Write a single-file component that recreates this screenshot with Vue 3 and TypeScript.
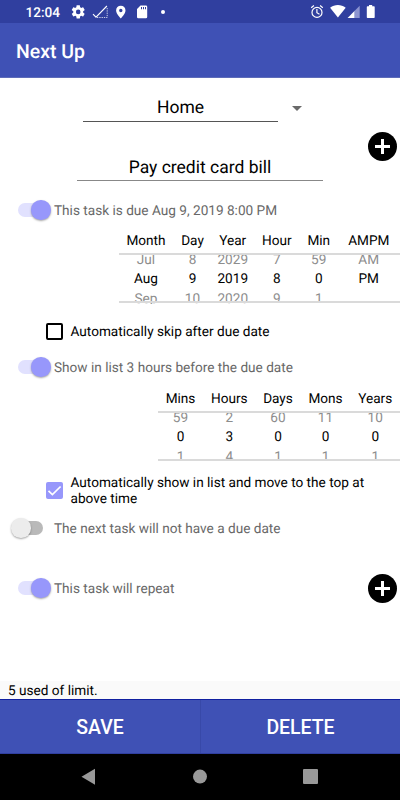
<script setup lang="ts">
import { ref } from 'vue'

interface PickerColumn {
  label: string
  before: string
  value: string
  after: string
}

const category = ref('Home')
const title = ref('Pay credit card bill')

const dueColumns: PickerColumn[] = [
  { label: 'Month', before: 'Jul', value: 'Aug', after: 'Sep' },
  { label: 'Day', before: '8', value: '9', after: '10' },
  { label: 'Year', before: '2029', value: '2019', after: '2020' },
  { label: 'Hour', before: '7', value: '8', after: '9' },
  { label: 'Min', before: '59', value: '0', after: '1' },
  { label: 'AMPM', before: 'AM', value: 'PM', after: '' },
]

const leadColumns: PickerColumn[] = [
  { label: 'Mins', before: '59', value: '0', after: '1' },
  { label: 'Hours', before: '2', value: '3', after: '4' },
  { label: 'Days', before: '60', value: '0', after: '1' },
  { label: 'Mons', before: '11', value: '0', after: '1' },
  { label: 'Years', before: '10', value: '0', after: '1' },
]
</script>

<template>
  <div class="screen">
    <header class="status">
      <span class="clock">12:04</span>
      <svg class="status-icons" viewBox="0 0 100 23" width="100" height="23">
        <path fill="#fff" fill-rule="evenodd" transform="translate(9.3 4) scale(.66)" d="M19.43 12.98c.04-.32.07-.64.07-.98s-.03-.66-.07-.98l2.11-1.65c.19-.15.24-.42.12-.64l-2-3.46c-.12-.22-.39-.3-.61-.22l-2.49 1c-.52-.4-1.08-.73-1.69-.98l-.38-2.65C14.46 2.18 14.25 2 14 2h-4c-.25 0-.46.18-.49.42l-.38 2.65c-.61.25-1.17.59-1.69.98l-2.49-1c-.23-.09-.49 0-.61.22l-2 3.46c-.13.22-.07.49.12.64l2.11 1.65c-.04.32-.07.65-.07.98s.03.66.07.98l-2.11 1.65c-.19.15-.24.42-.12.64l2 3.46c.12.22.39.3.61.22l2.49-1c.52.4 1.08.73 1.69.98l.38 2.65c.03.24.24.42.49.42h4c.25 0 .46-.18.49-.42l.38-2.65c.61-.25 1.17-.59 1.69-.98l2.49 1c.23.09.49 0 .61-.22l2-3.46c.12-.22.07-.49-.12-.64zM12 15.500a3.500 3.500 0 1 1 0-7 3.500 3.500 0 0 1 0 7z" />
        <path fill="none" stroke="#fff" stroke-width="1.100" d="M32 14.200l3 3L45.900 6" />
        <path fill="none" stroke="#fff" stroke-opacity=".75" stroke-dasharray="1.300 1" d="M46.200 8v9.500H35" />
        <path fill="#fff" fill-rule="evenodd" d="M59.800 5.800c-2.700 0-4.700 2-4.700 4.600 0 3.400 4.700 8 4.700 8s4.700-4.600 4.700-8c0-2.600-2-4.600-4.700-4.600zm0 3a1.700 1.700 0 1 1 0 3.400 1.700 1.700 0 0 1 0-3.400z" />
        <path fill="#fff" fill-rule="evenodd" d="M79.500 5.400h5.400q1.300 0 1.300 1.300v10.300q0 1.300-1.300 1.300h-7.600q-1.300 0-1.300-1.300V9zM80 7v2.200h1V7zm2 0v2.200h1V7zm2 0v2.200h1V7z" />
      </svg>
      <span class="dot"></span>
      <svg class="system-icons" viewBox="0 0 70 23" width="70" height="23">
        <g fill="none" stroke="#fff" stroke-width="1.200">
          <circle cx="7" cy="12.400" r="5" />
          <path d="M6.900 9v3.700l2.600 1.500M1.200 7.700l2.700-2.200M12.800 7.700l-2.700-2.200" />
        </g>
        <path fill="#fff" d="M20.100 7.800C24.600 4 31.100 4 35.700 7.800L27.900 17.500z" />
        <path fill="#fff" d="M37.600 18l7.100-7.200V18z" />
        <path fill="#8c94d0" d="M44.700 10.800l5-5V18h-5z" />
        <path fill="#fff" d="M59 5h3.200v1.200H64q.7 0 .7.700v10.400q0 .7-.7.700h-6.500q-.7 0-.7-.7V6.900q0-.7.700-.7H59z" />
      </svg>
    </header>
    <div class="appbar">Next Up</div>

    <main class="form">
      <div class="category-row">
        <div class="field category">{{ category }}</div>
        <span class="caret"></span>
      </div>
      <div class="title-row">
        <div class="field title">{{ title }}</div>
        <button class="add" aria-label="Add">
          <svg viewBox="0 0 29 29" width="29" height="29"><circle cx="14.500" cy="14.500" r="14.500" /><path d="M14.500 7v15M7 14.500h15" stroke="#fff" stroke-width="3" /></svg>
        </button>
      </div>

      <div class="switch-row">
        <span class="switch on"><i></i></span>
        <span class="text">This task is due Aug 9, 2019 8:00 PM</span>
      </div>

      <div class="picker due">
        <div v-for="c in dueColumns" :key="c.label" class="column">
          <span class="label">{{ c.label }}</span>
          <div class="wheel">
            <span>{{ c.before }}</span>
            <span class="current">{{ c.value }}</span>
            <span>{{ c.after }}</span>
          </div>
        </div>
      </div>

      <div class="check-row skip">
        <span class="box"></span>
        <span class="text">Automatically skip after due date</span>
      </div>

      <div class="switch-row lead-row">
        <span class="switch on"><i></i></span>
        <span class="text">Show in list 3 hours before the due date</span>
      </div>

      <div class="picker lead">
        <div v-for="c in leadColumns" :key="c.label" class="column">
          <span class="label">{{ c.label }}</span>
          <div class="wheel">
            <span>{{ c.before }}</span>
            <span class="current">{{ c.value }}</span>
            <span>{{ c.after }}</span>
          </div>
        </div>
      </div>

      <div class="check-row show">
        <span class="box checked">
          <svg viewBox="0 0 17 17" width="17" height="17"><path d="M2.500 8.800l3.900 3.800L14.600 4.500" fill="none" stroke="#fff" stroke-width="1.700" /></svg>
        </span>
        <span class="text">Automatically show in list and move to the top at above time</span>
      </div>

      <div class="switch-row next-row">
        <span class="switch"><i></i></span>
        <span class="text">The next task will not have a due date</span>
      </div>

      <div class="switch-row repeat-row">
        <span class="switch on"><i></i></span>
        <span class="text grow">This task will repeat</span>
        <button class="add" aria-label="Add repeat">
          <svg viewBox="0 0 29 29" width="29" height="29"><circle cx="14.500" cy="14.500" r="14.500" /><path d="M14.500 7v15M7 14.500h15" stroke="#fff" stroke-width="3" /></svg>
        </button>
      </div>
    </main>

    <div class="limit">5 used of limit.</div>
    <div class="actions">
      <button>SAVE</button>
      <button>DELETE</button>
    </div>
    <nav class="navbar">
      <svg viewBox="0 0 400 46" width="400" height="46" fill="#999">
        <path d="M81.500 22.700L95 14.800v15.900z" />
        <circle cx="200" cy="22.600" r="7" />
        <rect x="303" y="15" width="15" height="15" rx="1" />
      </svg>
    </nav>
  </div>
</template>

<style>
body {
  margin: 0;
}
</style>

<style scoped>
.screen {
  width: 400px;
  height: 800px;
  display: flex;
  flex-direction: column;
  overflow: hidden;
  background: #fff;
  color: #000;
  font-family: Roboto, sans-serif;
  font-size: 13.61px;
  text-rendering: geometricPrecision;
}
.status {
  flex: none;
  height: 23px;
  display: flex;
  align-items: center;
  background: #303f9f;
  color: #fff;
}
.clock {
  width: 35px;
  margin: 2px 0 0 25.500px;
  font-weight: 500;
  white-space: nowrap;
}
.status-icons {
  flex: none;
}
.dot {
  width: 4px;
  height: 4px;
  margin-left: 0.500px;
  border-radius: 50%;
  background: #fff;
}
.system-icons {
  margin-left: 145px;
  flex: none;
}
.appbar {
  flex: none;
  height: 55px;
  box-sizing: border-box;
  padding: 3px 0 0 16px;
  display: flex;
  align-items: center;
  background: #3f51b5;
  border-bottom: 1px solid #5e6cb9;
  color: #fff;
  font-size: 19.440px;
  font-weight: 500;
}
.form {
  flex: 1;
  min-height: 0;
}
.category-row {
  display: flex;
  padding: 15px 0 0 83px;
}
.field {
  box-sizing: border-box;
  text-align: center;
  font-size: 17.500px;
}
.category {
  width: 195px;
  height: 29px;
  line-height: 31px;
  border-bottom: 1px solid #555;
}
.caret {
  width: 0;
  height: 0;
  margin: 13px 0 0 14px;
  border: 5px solid transparent;
  border-top-color: #6a6a6a;
  border-bottom: 0;
}
.title-row {
  display: flex;
  padding: 10px 3px 0 77px;
  height: 49px;
  justify-content: space-between;
}
.title {
  width: 246px;
  height: 49px;
  line-height: 73px;
  border-bottom: 1px solid #888;
}
.add {
  width: 29px;
  height: 29px;
  padding: 0;
  border: 0;
  background: none;
}
.add svg {
  display: block;
}
.switch-row {
  display: flex;
  align-items: center;
  height: 30px;
  padding: 0 3px 0 11px;
  margin-top: 14px;
  color: #686868;
}
.text {
  padding-top: 2px;
}
.switch {
  width: 43px;
  height: 20px;
  box-sizing: border-box;
  padding-top: 3px;
  flex: none;
  display: flex;
}
.switch::before {
  content: '';
  width: 25px;
  height: 13.500px;
  margin-left: 7px;
  border-radius: 7px;
  background: #b9b9b9;
}
.switch i {
  width: 19.500px;
  height: 19.500px;
  margin: -3px 0 0 -32px;
  border-radius: 50%;
  background: #ececec;
  box-shadow: 0 1px 2px rgba(0, 0, 0, 0.35);
}
.switch.on::before {
  background: #e1e1fe;
}
.switch.on i {
  margin-left: -12px;
  background: #9797fb;
}
.picker {
  display: grid;
  height: 72px;
  text-align: center;
}
.due {
  margin: 7px 0 0 119px;
  grid-template-columns: 54px 39px 41.500px 46.500px 37.500px 62.500px;
}
.lead {
  margin: 8px 0 0 158px;
  grid-template-columns: 45px 52.500px 45px 50px 49.500px;
}
.label {
  display: block;
  height: 21px;
  line-height: 19px;
}
.wheel {
  position: relative;
  height: 51px;
  overflow: hidden;
}
.wheel::before,
.wheel::after {
  content: '';
  position: absolute;
  left: 0;
  right: 0;
  height: 2px;
  background: #dadada;
}
.wheel::before {
  top: 0;
}
.wheel::after {
  top: 48px;
}
.wheel span {
  display: block;
  height: 19.300px;
  line-height: 19.300px;
  color: #8d8d8d;
}
.wheel span:first-child {
  margin-top: -2px;
}
.wheel .current {
  color: #000;
}
.check-row {
  display: flex;
  align-items: center;
  padding-left: 46px;
  line-height: 16px;
}
.box {
  width: 17px;
  height: 17px;
  margin-right: 7.500px;
  box-sizing: border-box;
  flex: none;
  border: 2px solid #000;
  border-radius: 2px;
}
.box.checked {
  border: 0;
  background: #9797fb;
}
.box svg {
  display: block;
}
.skip {
  height: 30px;
  margin-top: 12px;
}
.lead-row {
  margin-top: 6px;
}
.show {
  height: 34px;
  margin-top: 11px;
  padding-right: 20px;
}
.next-row {
  margin-top: 6px;
}
.repeat-row {
  margin-top: 30px;
}
.grow {
  flex: 1;
}
.limit {
  flex: none;
  height: 18px;
  padding-left: 8px;
  line-height: 20px;
  background: #fafafa;
}
.actions {
  flex: none;
  display: grid;
  grid-template-columns: 1fr 1fr;
  height: 55px;
  box-sizing: border-box;
  border-top: 1px solid #1020a0;
  border-bottom: 1px solid #303f9f;
  background: #3f51b5;
}
.actions button {
  padding: 1px 0 0;
  border: 0;
  background: none;
  color: #fff;
  font: 500 19.440px Roboto, sans-serif;
}
.actions button + button {
  border-left: 1px solid #3849a8;
}
.navbar {
  flex: none;
  height: 46px;
  background: #000;
}
.navbar svg {
  display: block;
}
</style>
